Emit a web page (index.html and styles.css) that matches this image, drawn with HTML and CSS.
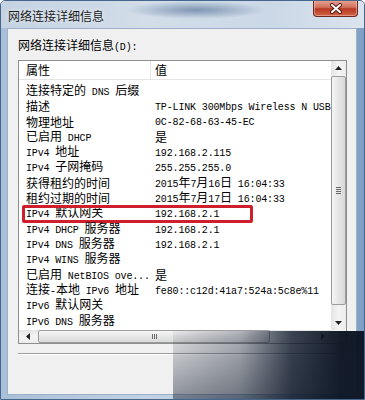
FILE: index.html
```html
<!DOCTYPE html>
<html>
<head>
    <title>网络连接详细信息</title>
    <meta charset="utf-8">
    <link rel="stylesheet" href="styles.css">
</head>
<body>
<div class="window">
    <div class="titlebar">
        <span class="title">网络连接详细信息</span>
        <span class="close">
            <svg width="14" height="11" viewBox="0 0 14 11">
                <path d="M3 2 L11 9 M11 2 L3 9" stroke="#5a1a14" stroke-width="4" stroke-linecap="round"/>
                <path d="M3 2 L11 9 M11 2 L3 9" stroke="#fff" stroke-width="2" stroke-linecap="round"/>
            </svg>
        </span>
    </div>

    <div class="client">
        <div class="label">网络连接详细信息<span class="en">(D):</span></div>

        <div class="listbox">
            <div class="view">
                <div class="head">
                    <div class="cell">属性</div>
                    <div class="cell">值</div>
                </div>
                <div class="rows" id="rows"></div>
            </div>
            <div class="vscroll">
                <div class="btn"><svg width="7" height="4"><path d="M0 4 L3.5 0 L7 4 Z" fill="#222"/></svg></div>
                <div class="track">
                    <div class="thumb"><i></i><i></i><i></i><i></i></div>
                </div>
                <div class="btn"><svg width="7" height="4"><path d="M0 0 L3.5 4 L7 0 Z" fill="#222"/></svg></div>
            </div>
            <div class="hscroll">
                <div class="btn"><svg width="4" height="7"><path d="M4 0 L0 3.5 L4 7 Z" fill="#222"/></svg></div>
                <div class="track">
                    <div class="thumb"><i></i><i></i><i></i></div>
                </div>
                <div class="btn"><svg width="4" height="7"><path d="M0 0 L4 3.5 L0 7 Z" fill="#222"/></svg></div>
            </div>
            <div class="corner"></div>
        </div>

        <div class="sep"></div>
    </div>

    <div class="watermark"></div>
</div>

<script type="text/javascript">
var details = [
    ['连接特定的 DNS 后缀', ''],
    ['描述', 'TP-LINK 300Mbps Wireless N USB'],
    ['物理地址', '0C-82-68-63-45-EC'],
    ['已启用 DHCP', '是'],
    ['IPv4 地址', '192.168.2.115'],
    ['IPv4 子网掩码', '255.255.255.0'],
    ['获得租约的时间', '2015年7月16日 16:04:33'],
    ['租约过期的时间', '2015年7月17日 16:04:33'],
    ['IPv4 默认网关', '192.168.2.1'],
    ['IPv4 DHCP 服务器', '192.168.2.1'],
    ['IPv4 DNS 服务器', '192.168.2.1'],
    ['IPv4 WINS 服务器', ''],
    ['已启用 NetBIOS ove...', '是'],
    ['连接-本地 IPv6 地址', 'fe80::c12d:41a7:524a:5c8e%11'],
    ['IPv6 默认网关', ''],
    ['IPv6 DNS 服务器', '']
];
var marked = 8;

// latin runs use the narrow half-width font, like SimSun does
function wrapLatin(s) {
    return s.replace(/[\x20-\x7e]+/g, function (m) {
        return '<span class="en">' + m + '</span>';
    });
}

var html = '';
for (var i = 0; i < details.length; i++) {
    html += '<div class="row' + (i === marked ? ' marked' : '') + '">';
    html += '<div class="cell">' + wrapLatin(details[i][0]) + '</div>';
    html += '<div class="cell">' + wrapLatin(details[i][1]) + '</div>';
    html += '</div>';
}
document.getElementById('rows').innerHTML = html;
</script>
</body>
</html>
```

FILE: styles.css
```css
body {
    margin: 0;
    padding: 0;
    font: 12px "Noto Sans CJK SC", sans-serif;
    color: #000;
    background: #fff;
}

.en {
    font-family: "Liberation Mono", monospace;
    font-size: 10px;
    letter-spacing: -0.15px;
}

.window {
    position: relative;
    width: 365px;
    height: 400px;
    box-sizing: border-box;
    display: flex;
    flex-direction: column;
    border: 1px solid #46668c;
    border-radius: 5px 5px 0 0;
    background: linear-gradient(to right, #a9bfd8, #c2d2e3 40%, #b9cbe0 80%, #7f9ec3);
    overflow: hidden;
}

.titlebar {
    height: 27px;
    flex: none;
    display: flex;
    justify-content: space-between;
    align-items: flex-start;
    background:
        radial-gradient(ellipse 70px 9px at 195px 9px, rgba(60, 92, 135, 0.55), rgba(60, 92, 135, 0)),
        linear-gradient(to right, #c4d2e2, #d2dde9 40%, #cbd8e7 75%, #dbe4ee);
}

.title {
    margin: 7px 0 0 7px;
    line-height: 15px;
    color: #1c1c1c;
    text-shadow: 0 0 5px rgba(255, 255, 255, 0.9);
}

.close {
    width: 45px;
    height: 17px;
    margin: -1px 6px 0 0;
    box-sizing: border-box;
    display: flex;
    align-items: center;
    justify-content: center;
    border: 1px solid #6e2a22;
    border-top: none;
    border-radius: 0 0 4px 4px;
    background: linear-gradient(#e9a593, #d1735e 45%, #b83a24 55%, #cf6446);
    box-shadow: inset 0 0 0 1px rgba(255, 220, 210, 0.45);
}

.client {
    flex: 1;
    margin: 0 7px 4px 6px;
    padding: 8px 9px 0 10px;
    border: 1px solid #9cb0c8;
    background: #f0f0f0;
}

.label {
    line-height: 15px;
    margin-bottom: 5px;
}

.listbox {
    height: 284px;
    box-sizing: border-box;
    border: 1px solid #8e8f8f;
    background: #fff;
    display: grid;
    grid-template-columns: 1fr 15px;
    grid-template-rows: 1fr 13px;
}

.view {
    overflow: hidden;
}

.head {
    height: 19px;
    box-sizing: border-box;
    display: grid;
    grid-template-columns: 131px 1fr;
    border-bottom: 1px solid #e5e5e5;
}

.head .cell {
    line-height: 18px;
    padding-left: 7px;
}

.head .cell + .cell {
    border-left: 1px solid #e5e5e5;
    padding-left: 4px;
}

.rows {
    padding-top: 3px;
}

.row {
    position: relative;
    height: 15.33px;
    display: grid;
    grid-template-columns: 131px 1fr;
    align-items: center;
    white-space: pre;
}

.row .cell {
    line-height: 15px;
    padding-left: 7px;
    overflow: hidden;
}

.row .cell + .cell {
    padding-left: 5px;
}

.row.marked::after {
    content: "";
    position: absolute;
    left: 3px;
    top: -1px;
    width: 231px;
    height: 18px;
    box-sizing: border-box;
    border: 3px solid #cf1f2c;
    border-radius: 2px;
}

.vscroll {
    display: flex;
    flex-direction: column;
    background: linear-gradient(to right, #e4e4e4, #f4f4f4 50%, #ececec);
}

.hscroll {
    display: flex;
    background: linear-gradient(#e4e4e4, #f4f4f4 50%, #ececec);
}

.vscroll .btn {
    height: 14px;
    display: flex;
    align-items: center;
    justify-content: center;
}

.hscroll .btn {
    width: 17px;
    display: flex;
    align-items: center;
    justify-content: center;
}

.track {
    flex: 1;
    display: flex;
}

.thumb {
    box-sizing: border-box;
    border: 1px solid #9c9c9c;
    border-radius: 2px;
    display: flex;
    align-items: center;
    justify-content: center;
    gap: 1px;
}

.vscroll .thumb {
    width: 100%;
    height: 229px;
    margin-top: 1px;
    flex-direction: column;
    background: linear-gradient(to right, #f6f6f6, #e6e6e6 50%, #d9d9d9);
}

.hscroll .thumb {
    width: 232px;
    margin-left: 2px;
    background: linear-gradient(#f6f6f6, #e6e6e6 50%, #d9d9d9);
}

.vscroll .thumb i {
    width: 5px;
    height: 1px;
    background: #6a6a6a;
}

.hscroll .thumb i {
    width: 1px;
    height: 5px;
    background: #6a6a6a;
}

.corner {
    background: #f0f0f0;
}

.sep {
    margin-top: 9px;
    border-top: 1px solid #a0a0a0;
    border-bottom: 1px solid #fff;
}

.watermark {
    position: absolute;
    left: 172px;
    top: 330px;
    right: 0;
    bottom: 0;
    background:
        linear-gradient(to bottom, rgba(18, 28, 46, 0.05), rgba(18, 28, 46, 0.45)),
        linear-gradient(to right, rgba(18, 28, 46, 0), rgba(18, 28, 46, 0.25) 35%, rgba(18, 28, 46, 0.8) 62%, rgba(12, 20, 34, 0.97) 88%);
}
```
